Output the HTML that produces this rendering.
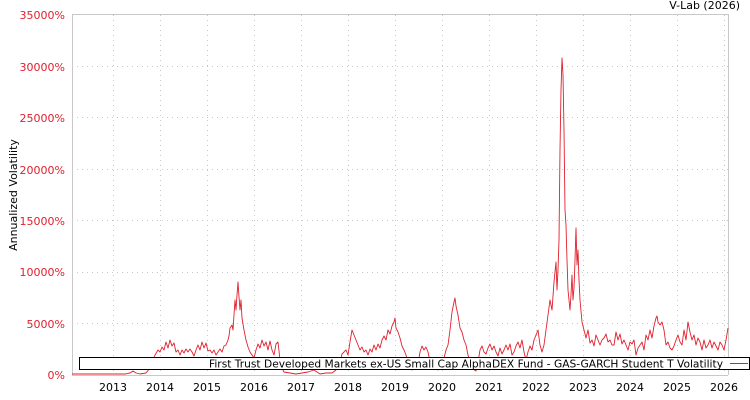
<!DOCTYPE html>
<html><head><meta charset="utf-8"><style>
html,body{margin:0;padding:0;background:#fff;width:750px;height:400px;overflow:hidden}
svg{display:block;font-family:"DejaVu Sans","Liberation Sans",sans-serif}
</style></head><body>
<svg width="750" height="400" viewBox="0 0 750 400">
<g stroke="#c8c8c8" stroke-width="1" stroke-dasharray="1,4">
<line x1="72" y1="66.5" x2="728" y2="66.5"/><line x1="72" y1="117.5" x2="728" y2="117.5"/>
<line x1="72" y1="169.5" x2="728" y2="169.5"/><line x1="72" y1="220.5" x2="728" y2="220.5"/>
<line x1="72" y1="272.5" x2="728" y2="272.5"/><line x1="72" y1="323.5" x2="728" y2="323.5"/>
<line x1="113.5" y1="15" x2="113.5" y2="375"/><line x1="160.5" y1="15" x2="160.5" y2="375"/>
<line x1="207.5" y1="15" x2="207.5" y2="375"/><line x1="254.5" y1="15" x2="254.5" y2="375"/>
<line x1="301.5" y1="15" x2="301.5" y2="375"/><line x1="348.5" y1="15" x2="348.5" y2="375"/>
<line x1="395.5" y1="15" x2="395.5" y2="375"/><line x1="442.5" y1="15" x2="442.5" y2="375"/>
<line x1="489.5" y1="15" x2="489.5" y2="375"/><line x1="536.5" y1="15" x2="536.5" y2="375"/>
<line x1="583.5" y1="15" x2="583.5" y2="375"/><line x1="630.5" y1="15" x2="630.5" y2="375"/>
<line x1="677.5" y1="15" x2="677.5" y2="375"/><line x1="724.5" y1="15" x2="724.5" y2="375"/>
</g>
<polyline fill="none" stroke="#c8c8c8" stroke-width="1" points="72.5,375 72.5,14.5 728.5,14.5 728.5,375"/>
<line x1="72" y1="375.5" x2="728" y2="375.5" stroke="#c8c8c8"/>
<polyline fill="none" stroke="#e0202e" stroke-width="0.9" stroke-linejoin="round" points="
72,374 100,374 125,374 130,373 133,371 136,373 140,374 146,373 150,368 153,360 155,355 158,350 160,352 162,347 164,350 166,342 168,348 170,340 172,346 174,343 176,352 178,350 180,355 182,350 184,353 186,349 188,352 190,349 192,352 194,356 196,350 198,345 200,350 202,342 204,348 206,343 208,351 210,350 212,353 214,350 216,355 218,352 220,349 222,352 224,346 226,345 228,340 229,336 230,328 232,325 233,330 235,300 236,310 237,295 238,282 239,297 240,310 241,300 242,318 244,330 246,340 248,347 250,352 252,355 254,358 256,350 258,344 260,348 262,340 264,346 266,342 268,350 270,341 272,350 274,355 276,344 278,342 280,360 282,368 284,372 290,373 296,374 302,373 308,372 314,370 320,374 326,373 332,373 336,370 340,362 342,354 344,352 346,350 348,355 350,342 352,330 354,335 356,340 358,345 360,350 362,347 364,352 366,350 368,355 370,349 372,352 374,345 376,350 378,344 380,348 382,340 384,336 386,340 388,330 390,334 392,326 394,322 395,318 396,328 398,332 400,338 402,346 404,350 406,355 408,362 410,366 412,370 418,365 420,352 422,346 424,350 426,347 428,352 430,362 434,366 438,370 442,365 444,358 446,350 448,345 450,330 452,312 454,302 455,298 456,306 458,315 460,328 462,332 464,340 466,345 468,355 470,362 472,368 476,371 478,362 480,350 482,346 484,352 486,354 488,348 490,344 492,350 494,346 496,352 498,356 500,348 502,354 504,350 506,345 508,350 510,344 512,355 514,352 516,346 518,342 520,348 522,340 524,352 526,360 528,352 530,346 532,350 534,340 536,335 538,330 540,345 542,352 544,345 546,330 548,315 550,300 552,310 554,282 556,262 557,290 558,270 559,240 560,150 561,90 562,58 563,75 564,130 565,210 566,225 567,260 568,290 569,300 570,310 571,295 572,275 573,300 574,288 575,260 576,228 577,265 578,250 579,280 580,300 582,322 584,330 586,338 588,330 590,343 592,340 594,346 596,335 598,340 600,345 602,340 604,338 606,334 608,342 610,340 612,345 614,345 616,332 618,340 620,334 622,344 624,340 626,345 628,350 630,342 632,344 634,340 636,355 638,348 640,345 642,342 644,350 646,335 648,340 650,330 652,338 654,326 656,318 657,316 658,322 660,325 662,322 664,330 666,345 668,342 670,348 672,350 674,346 676,340 678,335 680,342 682,345 684,330 686,340 688,322 690,332 692,340 694,335 696,345 698,338 700,342 702,350 704,340 706,348 708,345 710,340 712,348 714,342 716,346 718,350 720,342 722,345 724,350 726,340 728,328"/>
<rect x="79.5" y="357.5" width="670" height="12" fill="#fff" stroke="#000" stroke-width="1"/>
<line x1="730" y1="363.5" x2="748" y2="363.5" stroke="#e0202e"/>
<line x1="726" y1="357.5" x2="750" y2="357.5" stroke="#000"/>
<line x1="726" y1="369.5" x2="750" y2="369.5" stroke="#000"/>
<text x="209" y="367.5" font-size="10.7" textLength="514" lengthAdjust="spacingAndGlyphs" fill="#000">First Trust Developed Markets ex-US Small Cap AlphaDEX Fund - GAS-GARCH Student T Volatility</text>
<g fill="#e0202e" font-size="11" text-anchor="end">
<text x="65" y="19">35000%</text><text x="65" y="71">30000%</text><text x="65" y="122">25000%</text>
<text x="65" y="174">20000%</text><text x="65" y="225">15000%</text><text x="65" y="276">10000%</text>
<text x="65" y="328">5000%</text><text x="65" y="379">0%</text>
</g>
<g fill="#000" font-size="11" text-anchor="middle">
<text x="113" y="391">2013</text><text x="160" y="391">2014</text><text x="207" y="391">2015</text>
<text x="254" y="391">2016</text><text x="301" y="391">2017</text><text x="348" y="391">2018</text>
<text x="395" y="391">2019</text><text x="442" y="391">2020</text><text x="489" y="391">2021</text>
<text x="536" y="391">2022</text><text x="583" y="391">2023</text><text x="630" y="391">2024</text>
<text x="677" y="391">2025</text><text x="724" y="391">2026</text>
</g>
<text x="740" y="9" font-size="11" text-anchor="end" fill="#000">V-Lab (2026)</text>
<text transform="translate(17,195) rotate(-90)" font-size="11" text-anchor="middle" fill="#000">Annualized Volatility</text>
</svg>
</body></html>
